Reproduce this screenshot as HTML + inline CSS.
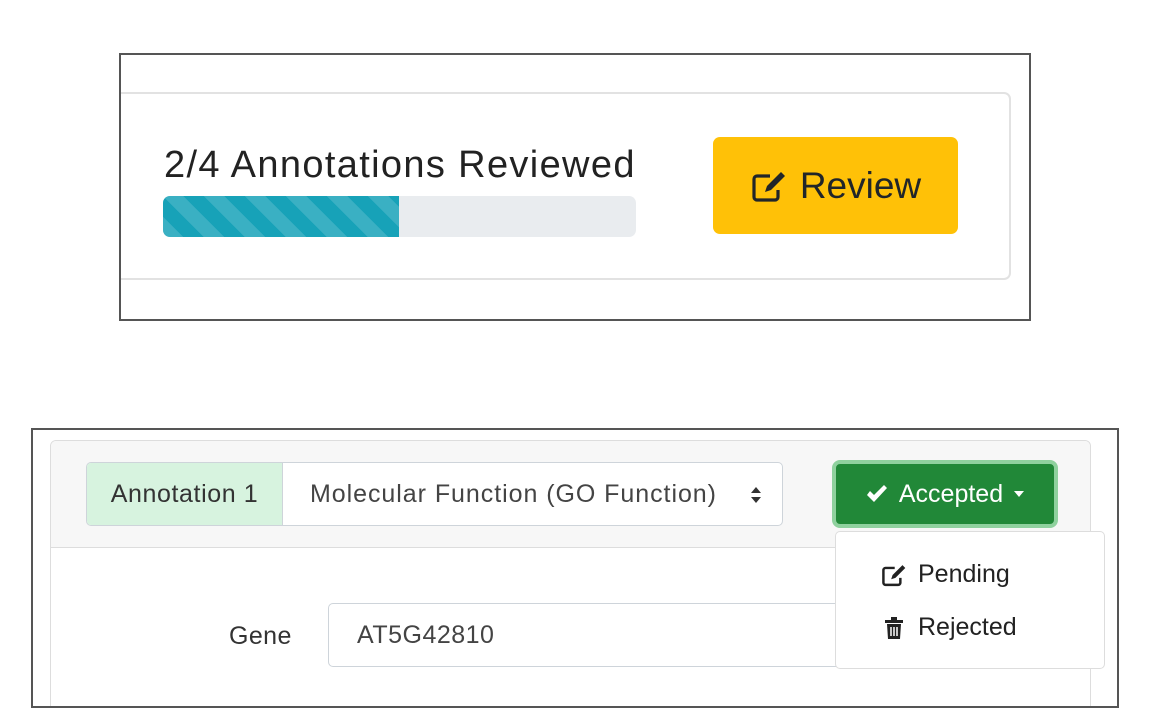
<!DOCTYPE html>
<html><head><style>
*{box-sizing:border-box;margin:0;padding:0}
body{width:1149px;height:727px;background:#fff;position:relative;overflow:hidden;font-family:"Liberation Sans",sans-serif}
.abs{position:absolute}
</style></head><body>
<!-- top frame -->
<div class="abs" style="left:119px;top:53px;width:912px;height:268px;border:2px solid #555;overflow:hidden;background:#fff">
  <div class="abs" style="left:-20px;top:37px;width:910px;height:188px;border:2px solid #e2e2e2;border-radius:7px"></div>
  <div class="abs" style="left:43px;top:89px;font-size:38px;color:#222;white-space:nowrap;letter-spacing:1.35px">2/4 Annotations Reviewed</div>
  <div class="abs" style="left:42px;top:141px;width:473px;height:41px;background:#e9ecef;border-radius:7px;overflow:hidden">
    <div style="width:236px;height:100%;background-color:#17a2b8;background-image:linear-gradient(45deg,rgba(255,255,255,.15) 25%,transparent 25%,transparent 50%,rgba(255,255,255,.15) 50%,rgba(255,255,255,.15) 75%,transparent 75%,transparent);background-size:41px 41px"></div>
  </div>
  <div class="abs" style="left:592px;top:82px;width:245px;height:97px;background:#ffc107;border-radius:7px;color:#212529;font-size:37px;display:flex;align-items:center;justify-content:center;gap:12px">
    <svg width="38" height="34" viewBox="0 0 38 34"><path d="M20 7H7a3 3 0 0 0-3 3v18a3 3 0 0 0 3 3h18a3 3 0 0 0 3-3v-7" fill="none" stroke="#212529" stroke-width="3.2"/><path d="M31 3l4 4-14 14-6 2 2-6z" fill="#212529"/></svg>
    <span>Review</span>
  </div>
</div>
<!-- bottom frame -->
<div class="abs" style="left:31px;top:428px;width:1088px;height:280px;border:2px solid #555;overflow:hidden;background:#fff">
  <div class="abs" style="left:17px;top:10px;width:1041px;height:300px;border:1px solid #ddd;border-radius:6px;overflow:hidden">
    <div style="height:107px;background:#f7f7f7;border-bottom:1px solid #ddd"></div>
  </div>
  <div class="abs" style="left:53px;top:32px;width:697px;height:64px;border:1px solid #ced4da;border-radius:5px;overflow:hidden;display:flex;background:#fff">
    <div style="width:196px;background:#d7f3df;border-right:1px solid #ced4da;font-size:25px;letter-spacing:0.6px;color:#333;display:flex;align-items:center;justify-content:center">Annotation 1</div>
    <div style="flex:1;font-size:25px;letter-spacing:0.95px;color:#444;display:flex;align-items:center;padding-left:27px;white-space:nowrap">Molecular Function (GO Function)</div>
    <svg class="abs" style="left:663px;top:22px" width="12" height="20" viewBox="0 0 12 20"><path d="M1 8L6 2l5 6z M1 12l5 6 5-6z" fill="#333"/></svg>
  </div>
  <div class="abs" style="left:196px;top:192px;font-size:25px;letter-spacing:0.4px;color:#333">Gene</div>
  <div class="abs" style="left:295px;top:173px;width:740px;height:64px;border:1px solid #ced4da;border-radius:5px;font-size:25px;letter-spacing:0.5px;color:#444;padding:17px 0 0 28px">AT5G42810</div>
  <div class="abs" style="left:799px;top:30px;width:226px;height:68px;border:4px solid #8fd19e;border-radius:8px;background:#218838;color:#fff;font-size:25px;display:flex;align-items:center;justify-content:center;gap:10px">
    <svg width="24" height="20" viewBox="0 0 24 20"><path d="M2 11l7 7L22 4l-3-3L9 11 5 7z" fill="#fff"/></svg>
    <span>Accepted</span>
    <svg width="12" height="8" viewBox="0 0 12 8"><path d="M1 1h10L6 7z" fill="#fff"/></svg>
  </div>
  <div class="abs" style="left:802px;top:101px;width:270px;height:138px;background:#fff;border:1px solid #ddd;border-radius:5px;font-size:25px;color:#222">
    <div class="abs" style="left:44px;top:28px;display:flex;align-items:center;gap:10px">
      <svg width="28" height="24" viewBox="0 0 38 34"><path d="M20 7H7a3 3 0 0 0-3 3v18a3 3 0 0 0 3 3h18a3 3 0 0 0 3-3v-7" fill="none" stroke="#222" stroke-width="3.5"/><path d="M31 3l4 4-14 14-6 2 2-6z" fill="#222"/></svg>
      <span>Pending</span>
    </div>
    <div class="abs" style="left:48px;top:81px;display:flex;align-items:center;gap:14px">
      <svg width="20" height="24" viewBox="0 0 20 24"><path d="M1 4h18v3H1z M7 1h6v3H7z M3 8h14l-1 15H4z" fill="#222"/><path d="M7 11v9M10 11v9M13 11v9" stroke="#fff" stroke-width="1.5"/></svg>
      <span>Rejected</span>
    </div>
  </div>
</div>
</body></html>
